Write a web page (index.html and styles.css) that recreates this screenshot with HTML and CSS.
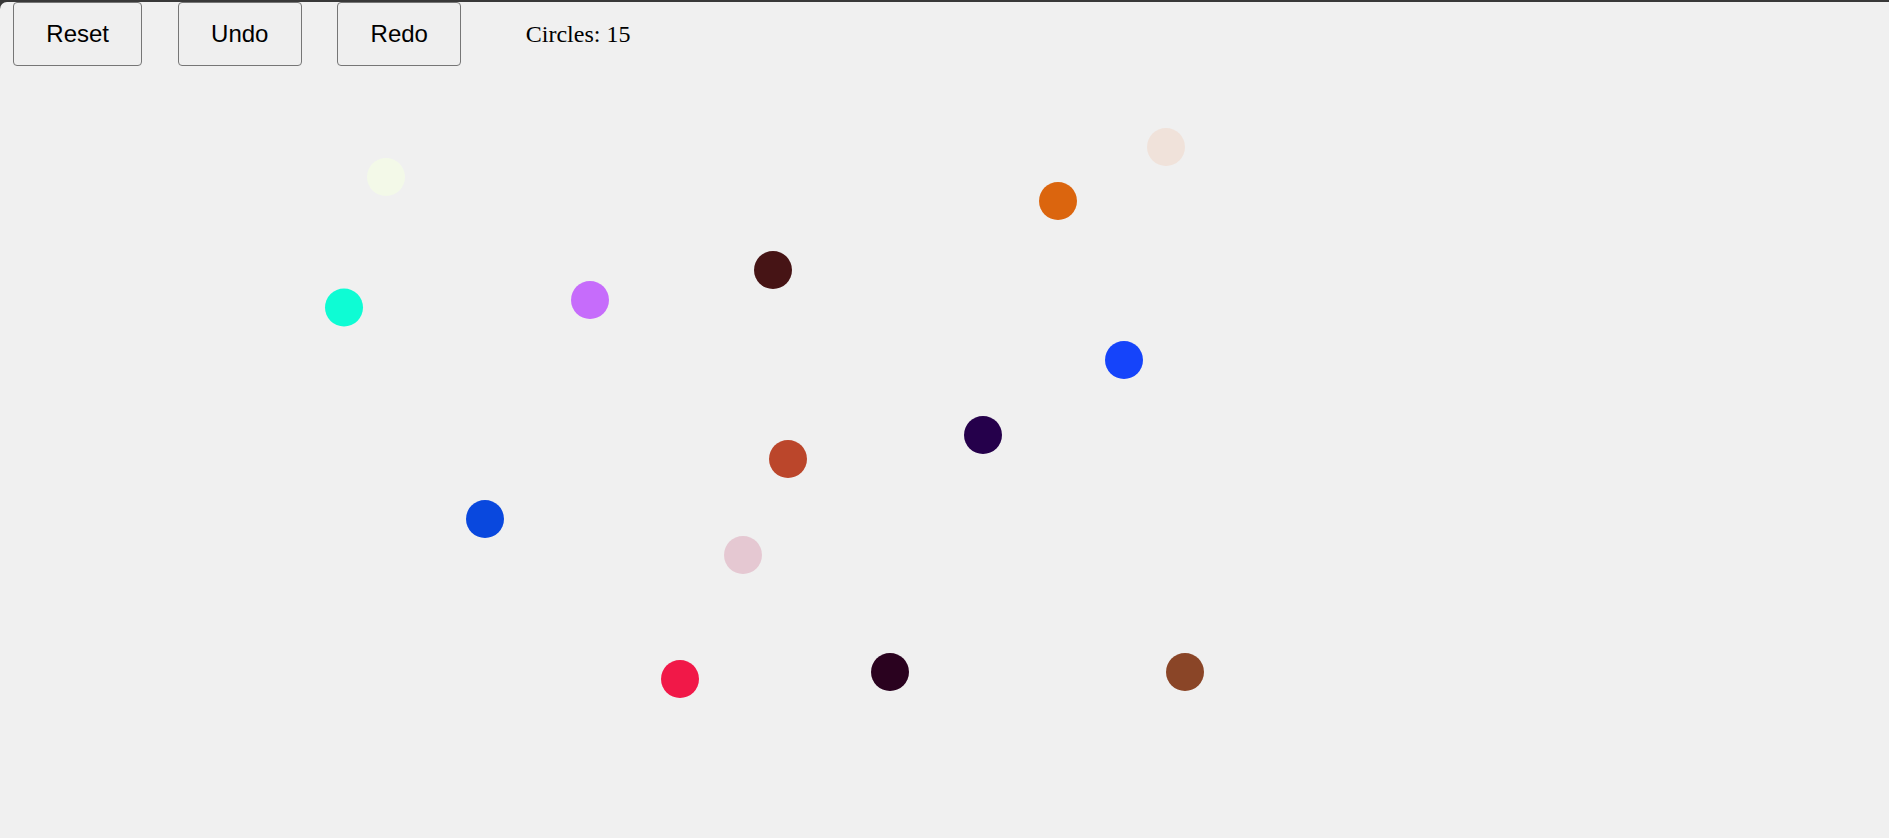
FILE: index.html
```html
<!DOCTYPE html>
<html lang="en">
<head>
<meta charset="utf-8">
<title>Circles</title>
<link rel="stylesheet" href="styles.css">
</head>
<body>
<div class="toolbar">
  <button class="btn">Reset</button>
  <button class="btn">Undo</button>
  <button class="btn">Redo</button>
  <span class="count">Circles: 15</span>
</div>
<svg class="board" width="1889" height="836" viewBox="0 2 1889 836" xmlns="http://www.w3.org/2000/svg">
  <circle cx="386" cy="177" r="19" fill="#f3f9e8"/>
  <circle cx="344" cy="307.5" r="19" fill="#0efcd4"/>
  <circle cx="590" cy="300" r="19" fill="#c66cfb"/>
  <circle cx="773" cy="270" r="19" fill="#461415"/>
  <circle cx="1166" cy="147" r="19" fill="#f0e2da"/>
  <circle cx="1058" cy="201" r="19" fill="#db650e"/>
  <circle cx="1124" cy="360" r="19" fill="#1544fa"/>
  <circle cx="983" cy="435" r="19" fill="#25004b"/>
  <circle cx="788" cy="459" r="19" fill="#bb462b"/>
  <circle cx="485" cy="519" r="19" fill="#0948de"/>
  <circle cx="743" cy="555" r="19" fill="#e5c8d2"/>
  <circle cx="680" cy="679" r="19" fill="#f11848"/>
  <circle cx="890" cy="672" r="19" fill="#2a021f"/>
  <circle cx="1185" cy="672" r="19" fill="#8a4527"/>
</svg>
</body>
</html>
```

FILE: styles.css
```css
html {
  background: #383838;
  height: 100%;
}
body {
  margin: 0;
  margin-top: 2px;
  min-height: calc(100vh - 2px);
  background: #f0f0f0;
  border-top-left-radius: 7px;
  position: relative;
  overflow: hidden;
  font-family: "Liberation Serif", "Times New Roman", serif;
}
.toolbar {
  display: flex;
  align-items: baseline;
  gap: 35.5px;
  padding-left: 13px;
  position: relative;
  z-index: 1;
}
.btn {
  font-family: "Liberation Sans", Arial, sans-serif;
  font-size: 24px;
  color: #000;
  background: #efefef;
  border: 1px solid #767676;
  border-radius: 4px;
  padding: 17px 32.3px;
  margin: 0;
  line-height: normal;
}
.count {
  font-size: 24px;
  color: #000;
  margin-left: 29px;
}
.board {
  position: absolute;
  top: 0;
  left: 0;
  pointer-events: none;
}
```
